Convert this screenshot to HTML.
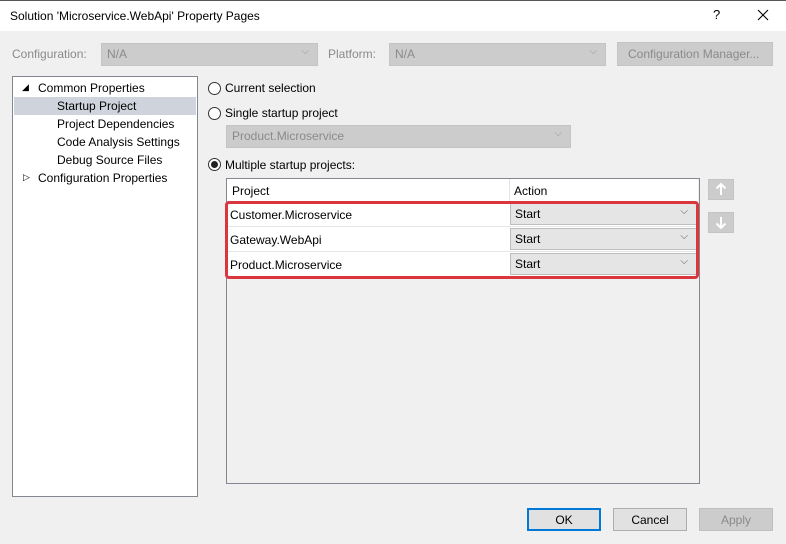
<!DOCTYPE html>
<html><head><style>
body{margin:0;width:786px;height:544px;overflow:hidden;font-family:"Liberation Sans",sans-serif;font-size:12px;color:#000;background:#f0f0f0;position:relative}
.a{position:absolute}
.title{left:0;top:0;width:786px;height:31px;background:#fff}
.dd{background:#cccccc;border:1px solid #c4c4c4;color:#8a8a8a;box-sizing:border-box;padding:3px 0 0 5px}
.chev{position:absolute;right:8px;top:2px;color:#999;font-size:10px}
.btn{box-sizing:border-box;border:1px solid #adadad;background:#e1e1e1;text-align:center;padding-top:4px}
.radio{width:11px;height:11px;border:1px solid #333;border-radius:50%;background:#fff}
.row{left:227px;width:471px;height:24px;border-bottom:1px solid #e6e6e6}
.sel{box-sizing:border-box;background:#e5e5e5;border:1px solid #bdbdbd;padding:3px 0 0 4px}
</style></head><body>
<div class="a title"></div>
<div class="a" style="left:0;top:0;width:786px;height:1px;background:#555"></div>
<div class="a" style="left:10px;top:9px;font-size:12px">Solution 'Microservice.WebApi' Property Pages</div>
<div class="a" style="left:713px;top:7px;font-size:13px">?</div>
<svg class="a" style="left:757px;top:9px" width="12" height="12"><path d="M1 1L11 11M11 1L1 11" stroke="#000" stroke-width="1.1"/></svg>

<div class="a" style="left:12px;top:47px;color:#8a8a8a">Configuration:</div>
<div class="a dd" style="left:101px;top:43px;width:217px;height:23px">N/A<span class="chev">⌵</span></div>
<div class="a" style="left:328px;top:47px;color:#8a8a8a">Platform:</div>
<div class="a dd" style="left:389px;top:43px;width:217px;height:23px">N/A<span class="chev">⌵</span></div>
<div class="a dd" style="left:617px;top:42px;width:156px;height:24px;color:#8a8a8a;background:#cccccc;padding-left:10px;padding-top:4px">Configuration Manager...</div>

<div class="a" style="left:12px;top:76px;width:184px;height:419px;background:#fff;border:1px solid #828790"></div>
<div class="a" style="left:14px;top:97px;width:182px;height:18px;background:#cfd3dc"></div>
<div class="a" style="left:22px;top:82px;font-size:9px">◢</div>
<div class="a" style="left:38px;top:81px">Common Properties</div>
<div class="a" style="left:57px;top:99px">Startup Project</div>
<div class="a" style="left:57px;top:117px">Project Dependencies</div>
<div class="a" style="left:57px;top:135px">Code Analysis Settings</div>
<div class="a" style="left:57px;top:153px">Debug Source Files</div>
<div class="a" style="left:23px;top:172px;font-size:9px">▷</div>
<div class="a" style="left:38px;top:171px">Configuration Properties</div>

<div class="a radio" style="left:208px;top:82px"></div>
<div class="a" style="left:225px;top:81px">Current selection</div>
<div class="a radio" style="left:208px;top:107px"></div>
<div class="a" style="left:225px;top:106px">Single startup project</div>
<div class="a dd" style="left:226px;top:125px;width:345px;height:23px">Product.Microservice<span class="chev">⌵</span></div>
<div class="a radio" style="left:208px;top:158px"></div>
<div class="a" style="left:211px;top:161px;width:7px;height:7px;border-radius:50%;background:#222"></div>
<div class="a" style="left:225px;top:158px">Multiple startup projects:</div>

<div class="a" style="left:226px;top:178px;width:472px;height:304px;background:#f0f0f0;border:1px solid #828790"></div>
<div class="a" style="left:227px;top:179px;width:471px;height:22px;background:#fff;border-bottom:1px solid #e5e5e5"></div>
<div class="a" style="left:509px;top:179px;width:1px;height:22px;background:#e5e5e5"></div>
<div class="a" style="left:232px;top:184px">Project</div>
<div class="a" style="left:514px;top:184px">Action</div>
<div class="a row" style="top:202px;background:#fff"></div>
<div class="a row" style="top:227px;background:#fff"></div>
<div class="a row" style="top:252px;background:#fff"></div>
<div class="a" style="left:230px;top:208px">Customer.Microservice</div>
<div class="a" style="left:230px;top:233px">Gateway.WebApi</div>
<div class="a" style="left:230px;top:258px">Product.Microservice</div>
<div class="a sel" style="left:510px;top:203px;width:187px;height:22px">Start<span class="chev" style="color:#555">⌵</span></div>
<div class="a sel" style="left:510px;top:228px;width:187px;height:22px">Start<span class="chev" style="color:#555">⌵</span></div>
<div class="a sel" style="left:510px;top:253px;width:187px;height:22px">Start<span class="chev" style="color:#555">⌵</span></div>
<div class="a" style="left:225px;top:201px;width:468px;height:72px;border:3px solid #d9363e;border-radius:4px"></div>

<div class="a" style="left:708px;top:179px;width:26px;height:21px;background:#ccc;border:1px solid #c4c4c4;box-sizing:border-box"><svg width="24" height="19"><path d="M12 4V15M7.5 8.5L12 4L16.5 8.5" stroke="#fff" stroke-width="2" fill="none"/></svg></div>
<div class="a" style="left:708px;top:212px;width:26px;height:21px;background:#ccc;border:1px solid #c4c4c4;box-sizing:border-box"><svg width="24" height="19"><path d="M12 4V15M7.5 10.5L12 15L16.5 10.5" stroke="#fff" stroke-width="2" fill="none"/></svg></div>

<div class="a btn" style="left:527px;top:508px;width:74px;height:23px;border:2px solid #0078d7;padding-top:3px">OK</div>
<div class="a btn" style="left:613px;top:508px;width:74px;height:23px">Cancel</div>
<div class="a btn" style="left:699px;top:508px;width:74px;height:23px;background:#ccc;border-color:#bfbfbf;color:#8a8a8a">Apply</div>
</body></html>
